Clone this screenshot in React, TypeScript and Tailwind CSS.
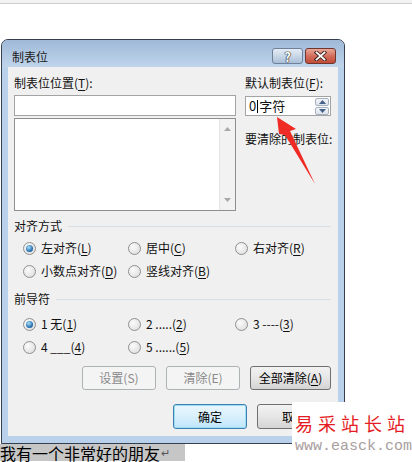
import React from "react";

const U = ({ c }: { c: string }) => <span className="underline underline-offset-[2px] decoration-[1px]">{c}</span>;

function Radio({ checked = false }: { checked?: boolean }) {
  return (
    <span className="w-[13px] h-[13px] shrink-0 rounded-full border border-[#8f9090] bg-[radial-gradient(circle_at_35%_35%,#fbfbfb,#d9d9d9)] flex items-center justify-center">
      {checked && (
        <span className="w-[7px] h-[7px] rounded-full bg-[radial-gradient(circle_at_40%_35%,#a9e1fb,#2a73b2_60%,#18497a)]" />
      )}
    </span>
  );
}

function RItem({ checked, children }: { checked?: boolean; children: React.ReactNode }) {
  return (
    <div className="flex items-center gap-[5px] h-[16px] text-[12px] leading-[16px] text-[#111] whitespace-nowrap">
      <Radio checked={checked} />
      <span>{children}</span>
    </div>
  );
}

function Btn({ w, disabled, def, children }: { w: string; disabled?: boolean; def?: boolean; children: React.ReactNode }) {
  const base = "h-full flex items-center justify-center text-[12px] rounded-[3px] border";
  const style = def
    ? "border-[#3c7fb1] bg-linear-to-b from-[#eaf6fd] via-[#d9f0fc] to-[#bee6fd] shadow-[inset_0_0_0_1px_#9fdcf7] text-[#000]"
    : disabled
    ? "border-[#adb2b5] bg-[#f4f4f4] text-[#8a8a8a]"
    : "border-[#707070] bg-linear-to-b from-[#f2f2f2] via-[#e6e6e6] to-[#d4d4d4] text-[#000]";
  return <div className={`${w} ${base} ${style}`}>{children}</div>;
}

function Tri({ up }: { up?: boolean }) {
  return (
    <svg width="7" height="4" viewBox="0 0 7 4">
      <polygon points={up ? "0,4 7,4 3.5,0" : "0,0 7,0 3.5,4"} fill="#a8a8a8" />
    </svg>
  );
}

export default function App() {
  return (
    <div className="relative w-[412px] h-[462px] bg-white overflow-hidden font-['Noto_Sans_CJK_SC',sans-serif]">
      <div className="h-[4px] bg-[#f3f3f3] border-b border-[#cdcdcd]" />

      <div className="mt-[35px] ml-[1px] w-[344px] h-[405px] rounded-t-[7px] border border-[#34404f] bg-[#b9d1ea] flex flex-col overflow-hidden">
        {/* title bar */}
        <div className="h-[27px] shrink-0 bg-linear-to-b from-[#9fb9d7] to-[#c0d5ec] flex items-start pl-[10px] pr-[8px]">
          <div className="pt-[9px] text-[12px] leading-[16px] text-[#1a1a1a]">制表位</div>
          <div className="ml-auto mt-[8px] flex gap-[2px]">
            <div className="w-[31px] h-[16px] rounded-[3px] border border-[#6f8098] bg-linear-to-b from-[#e4ecf5] via-[#c9d7e7] to-[#a9bfd8] flex items-center justify-center text-white text-[13px] font-bold leading-none [text-shadow:0_0_1px_#222,0_0_1px_#222,0_0_1px_#222]">
              ?
            </div>
            <div className="w-[31px] h-[16px] rounded-[3px] border border-[#70352c] bg-linear-to-b from-[#e9a797] via-[#d36e5c] to-[#c04a36] flex items-center justify-center">
              <svg width="13" height="10" viewBox="0 0 13 10">
                <path d="M2.5 1.5 L10.5 8.5 M10.5 1.5 L2.5 8.5" stroke="#3a1f1b" strokeWidth="3.6" strokeLinecap="square" />
                <path d="M2.5 1.5 L10.5 8.5 M10.5 1.5 L2.5 8.5" stroke="#fff" strokeWidth="1.8" strokeLinecap="square" />
              </svg>
            </div>
          </div>
        </div>

        {/* body */}
        <div className="flex-1 px-[6px] pb-[6px]">
          <div className="h-[369px] bg-[#f0f0f0] pl-[6px] pr-[7px] pt-[8px] flex flex-col text-[12px] text-[#111]">
            {/* top section */}
            <div className="flex">
              <div className="w-[222px] flex flex-col">
                <div className="h-[16px] leading-[16px]">
                  制表位位置(<U c="T" />):
                </div>
                <div className="mt-[4px] h-[21px] bg-white border border-[#a3a3a3]" />
                <div className="mt-[2px] h-[93px] bg-white border border-[#8e8f8f] flex justify-end">
                  <div className="w-[16px] h-full bg-[#f2f2f2] border-l border-[#e4e4e4] flex flex-col items-center justify-between py-[8px]">
                    <Tri up />
                    <Tri />
                  </div>
                </div>
              </div>
              <div className="ml-[9px] w-[86px] flex flex-col">
                <div className="h-[16px] leading-[16px] whitespace-nowrap">
                  默认制表位(<U c="F" />):
                </div>
                <div className="mt-[5px] h-[20px] bg-white border border-[#a3a3a3] flex items-center pl-[3px] pr-[1px]">
                  <span className="text-[13px] leading-[18px]">0</span>
                  <span className="w-px h-[13px] bg-black mx-[1px]" />
                  <span className="text-[13px] leading-[18px]">字符</span>
                  <div className="ml-auto flex flex-col gap-px">
                    <div className="w-[14px] h-[8px] border border-[#a7b2c0] rounded-[2px] bg-linear-to-b from-[#f3f5f8] to-[#dde3ea] flex items-center justify-center">
                      <svg width="7" height="4" viewBox="0 0 7 4"><polygon points="0,4 7,4 3.5,0" fill="#45608b" /></svg>
                    </div>
                    <div className="w-[14px] h-[8px] border border-[#a7b2c0] rounded-[2px] bg-linear-to-b from-[#f3f5f8] to-[#dde3ea] flex items-center justify-center">
                      <svg width="7" height="4" viewBox="0 0 7 4"><polygon points="0,0 7,0 3.5,4" fill="#45608b" /></svg>
                    </div>
                  </div>
                </div>
                <div className="mt-[15px] h-[16px] leading-[16px] whitespace-nowrap">要清除的制表位:</div>
              </div>
            </div>

            {/* 对齐方式 */}
            <div className="mt-[7px] h-[16px] flex items-center gap-[6px]">
              <span className="leading-[16px]">对齐方式</span>
              <span className="flex-1 h-px bg-[#d5dfe5]" />
            </div>
            <div className="mt-[6px] pl-[9px] grid grid-cols-[105px_107px_1fr] gap-y-[7px]">
              <RItem checked>左对齐(<U c="L" />)</RItem>
              <RItem>居中(<U c="C" />)</RItem>
              <RItem>右对齐(<U c="R" />)</RItem>
              <RItem>小数点对齐(<U c="D" />)</RItem>
              <RItem>竖线对齐(<U c="B" />)</RItem>
            </div>

            {/* 前导符 */}
            <div className="mt-[12px] h-[16px] flex items-center gap-[6px]">
              <span className="leading-[16px]">前导符</span>
              <span className="flex-1 h-px bg-[#d5dfe5]" />
            </div>
            <div className="mt-[9px] pl-[9px] grid grid-cols-[105px_107px_1fr] gap-y-[7px]">
              <RItem checked>1 无(<U c="1" />)</RItem>
              <RItem>2 .....(<U c="2" />)</RItem>
              <RItem>3 ----(<U c="3" />)</RItem>
              <RItem>4 ___(<U c="4" />)</RItem>
              <RItem>5 ......(<U c="5" />)</RItem>
            </div>

            {/* buttons */}
            <div className="mt-[11px] h-[24px] flex justify-end gap-[10px]">
              <Btn w="w-[74px]" disabled>设置(S)</Btn>
              <Btn w="w-[74px]" disabled>清除(E)</Btn>
              <Btn w="w-[81px]">全部清除(<U c="A" />)</Btn>
            </div>
            <div className="mt-[14px] h-[25px] flex justify-end gap-[10px]">
              <Btn w="w-[74px]" def>确定</Btn>
              <Btn w="w-[74px]">取消</Btn>
            </div>
          </div>
        </div>
      </div>

      {/* document text */}
      <div className="h-[17px] flex items-center">
        <span className="bg-[#c6c6c6] h-[17px] w-[185px] flex items-center text-[16px] leading-[16px] text-black whitespace-nowrap">
          我有一个非常好的朋友
          <span className="text-[11px] leading-[11px] text-[#555] ml-[1px]">↵</span>
        </span>
      </div>

      {/* red arrow */}
      <svg className="absolute left-0 top-0 pointer-events-none" width="412" height="462" viewBox="0 0 412 462">
        <polygon points="277,117 296,129 290,131 315,184 285,135 279,134" fill="#ee2b25" />
      </svg>

      {/* watermark */}
      <div className="absolute left-[292px] top-[402px] w-[120px] h-[60px] bg-white flex flex-col items-start pl-[3px]">
        <div className="mt-[10px] text-[18px] leading-[22px] text-[#e51c23] tracking-[5px] whitespace-nowrap">易采站长站</div>
        <div className="mt-[4px] font-['Liberation_Mono',monospace] text-[15px] leading-[18px] text-[#a89e9e] whitespace-nowrap">www.easck.com</div>
      </div>
    </div>
  );
}
